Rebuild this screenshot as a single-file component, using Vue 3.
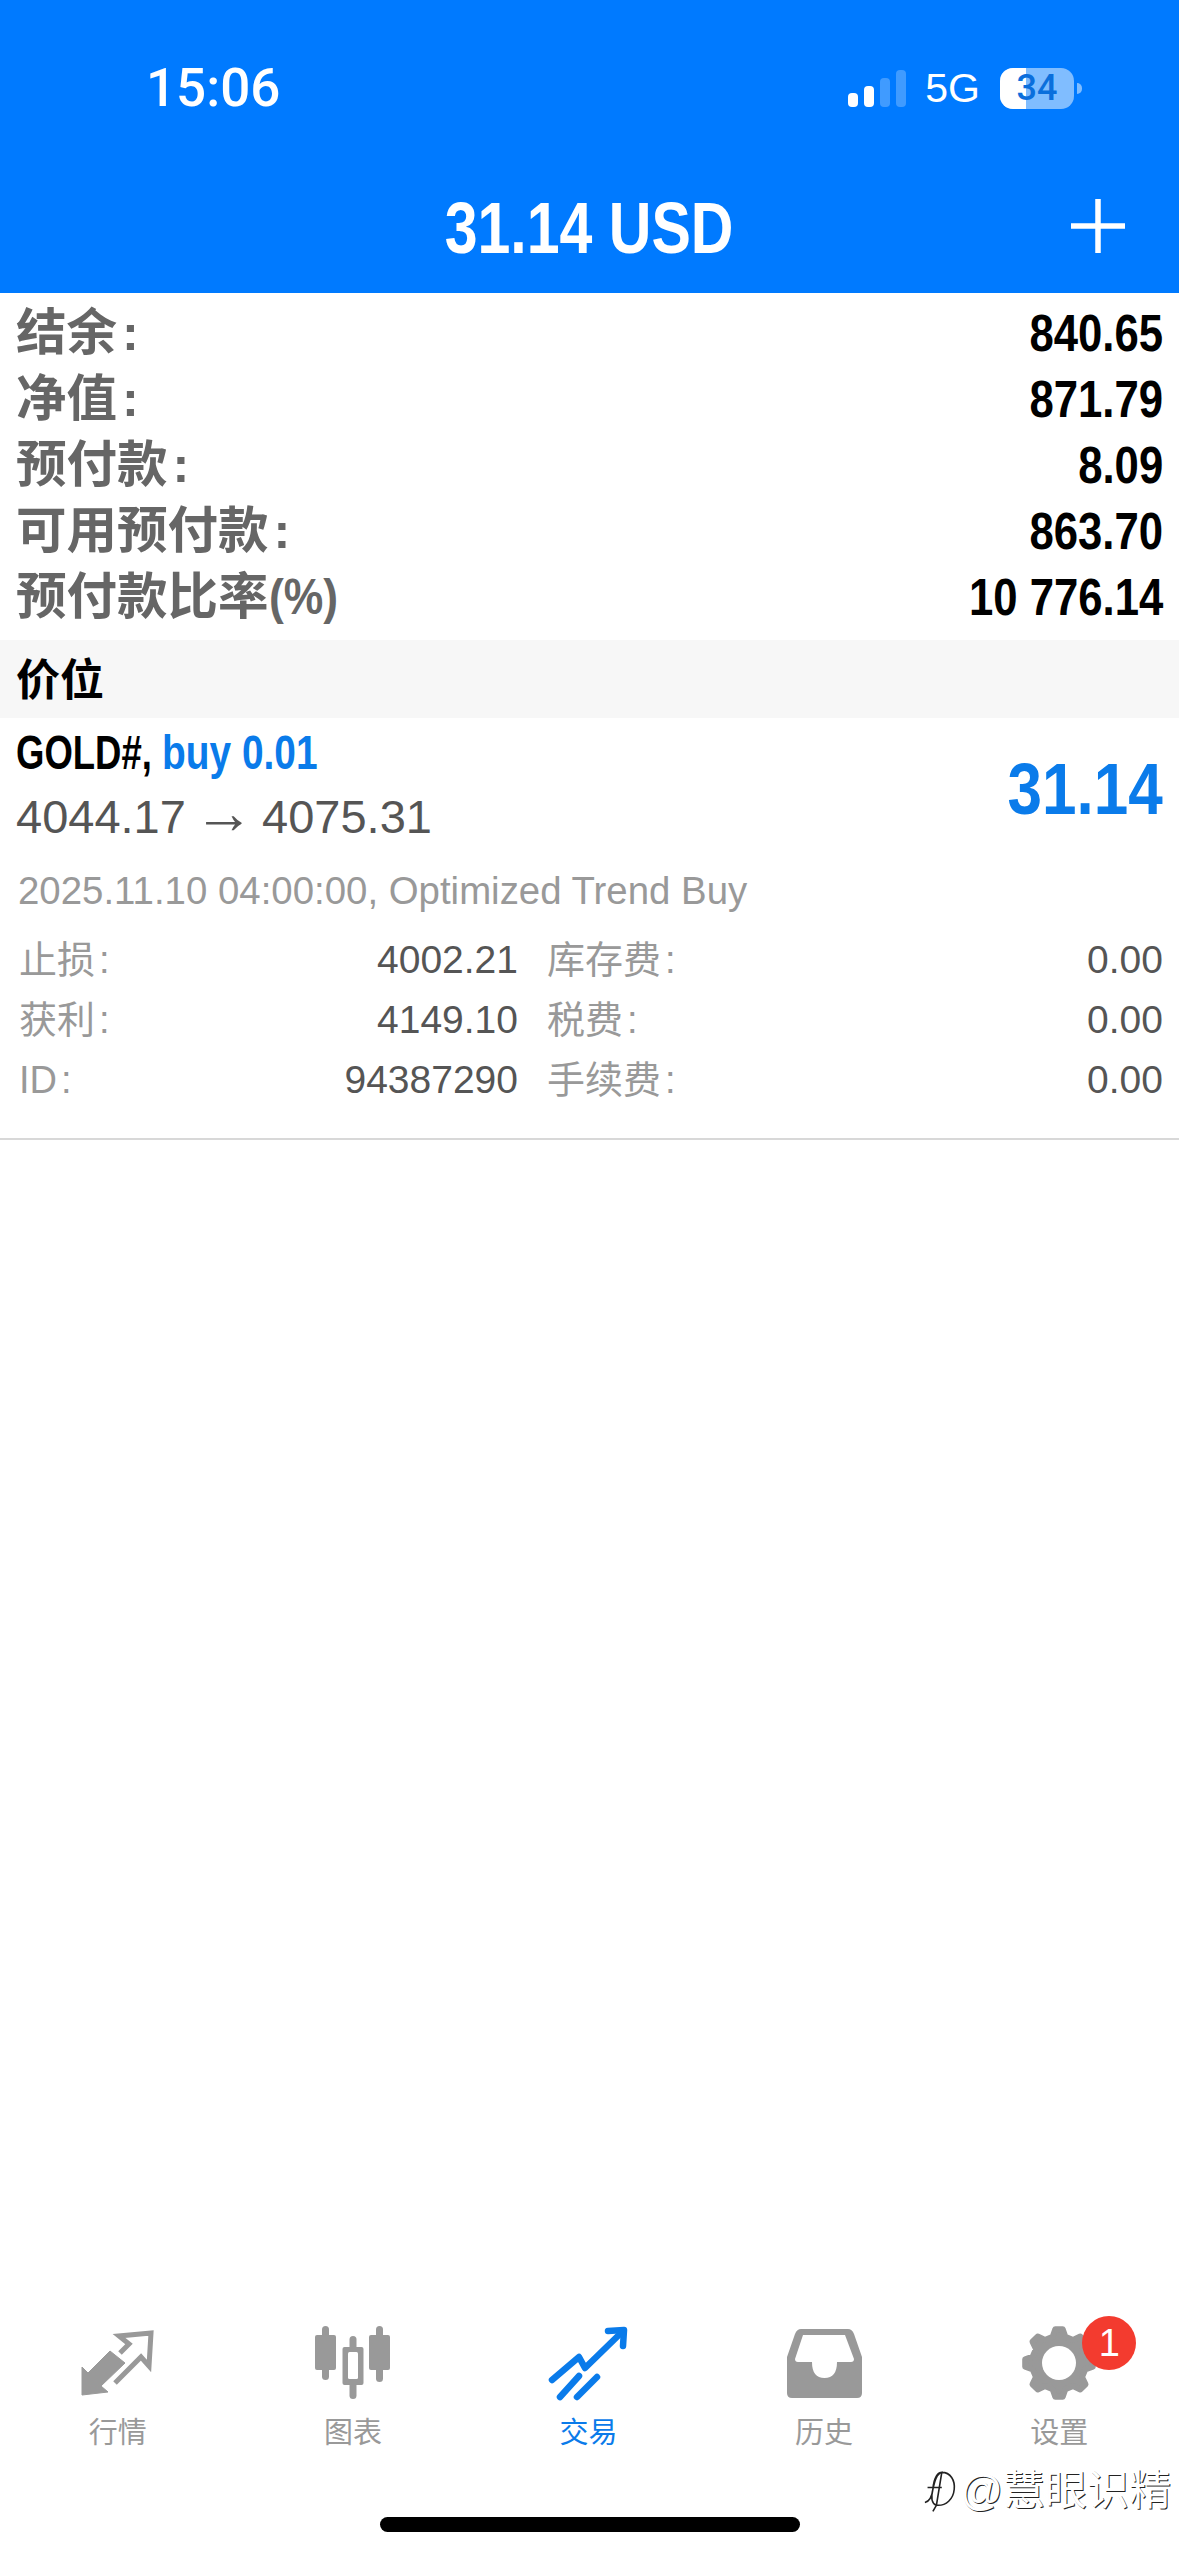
<script setup>
// 交易画面: 口座サマリー、ポジション、下部タブ
const summary = [
  { label: '结余', colon: true, value: '840.65' },
  { label: '净值', colon: true, value: '871.79' },
  { label: '预付款', colon: true, value: '8.09' },
  { label: '可用预付款', colon: true, value: '863.70' },
  { label: '预付款比率', suffix: '(%)', value: '10 776.14' }
]

const details = [
  { label: '止损', value: '4002.21', label2: '库存费', value2: '0.00' },
  { label: '获利', value: '4149.10', label2: '税费', value2: '0.00' },
  { label: 'ID', value: '94387290', label2: '手续费', value2: '0.00' }
]

// 歯車のアウトライン
const gearPoints = (() => {
  const pts = []
  const teeth = 8
  for (let i = 0; i < teeth; i++) {
    const a = (i / teeth) * Math.PI * 2 - Math.PI / 2
    const step = (Math.PI * 2) / teeth
    const add = (r, d) => {
      pts.push(
        (45 + r * Math.cos(a + d * step)).toFixed(1) + ',' + (38 + r * Math.sin(a + d * step)).toFixed(1)
      )
    }
    add(27, -0.3)
    add(34, -0.14)
    add(34, 0.14)
    add(27, 0.3)
  }
  return pts.join(' ')
})()
</script>

<template>
  <div class="page">
    <header class="top">
      <div class="status">
        <span class="time">15:06</span>
        <div class="status__right">
          <div class="signal">
            <i class="bar bar--1"></i>
            <i class="bar bar--2"></i>
            <i class="bar bar--3 bar--off"></i>
            <i class="bar bar--4 bar--off"></i>
          </div>
          <span class="net">5G</span>
          <div class="battery">
            <div class="battery__body">
              <div class="battery__fill"></div>
              <span class="battery__num">34</span>
            </div>
            <i class="battery__nub"></i>
          </div>
        </div>
      </div>
      <div class="nav">
        <span class="nav__title">31.14 USD</span>
        <svg class="nav__plus" viewBox="0 0 54 54" width="54" height="54">
          <path d="M27 0V54M0 27H54" stroke="#fff" stroke-width="5.5" fill="none" />
        </svg>
      </div>
    </header>

    <section class="summary">
      <div v-for="row in summary" :key="row.label" class="summary__row">
        <span class="summary__label">{{ row.label }}<span v-if="row.colon" class="summary__colon">:</span><span v-if="row.suffix" class="summary__suffix">{{ row.suffix }}</span></span>
        <span class="summary__value narrow narrow--right">{{ row.value }}</span>
      </div>
    </section>

    <div class="section-title">价位</div>

    <section class="position">
      <div class="position__head">
        <div>
          <div class="position__name">
            <span class="position__symbol">GOLD#,</span>
            <span class="position__side">buy 0.01</span>
          </div>
          <div class="position__price">4044.17 <span class="position__arrow">→</span> 4075.31</div>
        </div>
        <span class="position__profit">31.14</span>
      </div>
      <div class="position__date">2025.11.10 04:00:00, Optimized Trend Buy</div>
      <div class="details">
        <div v-for="d in details" :key="d.label" class="details__row">
          <div class="details__cell">
            <span class="details__label">{{ d.label }}<span class="details__colon">:</span></span>
            <span class="details__value">{{ d.value }}</span>
          </div>
          <div class="details__cell">
            <span class="details__label">{{ d.label2 }}<span class="details__colon">:</span></span>
            <span class="details__value">{{ d.value2 }}</span>
          </div>
        </div>
      </div>
    </section>

    <div class="spacer"></div>

    <nav class="tabs">
      <div class="tab">
        <svg viewBox="0 0 90 80" width="90" height="80">
          <path d="M9 70L9 42L15 48L37 26L52 38L28 61L35 67Z" fill="#999" stroke="#999" stroke-width="1" stroke-linejoin="round" />
          <path d="M47 28L56 19L46 11L78 8L76 41L68 32L42 58" fill="none" stroke="#999" stroke-width="5" />
        </svg>
        <span class="tab__label">行情</span>
      </div>
      <div class="tab">
        <svg viewBox="0 0 90 80" width="90" height="80">
          <g fill="#999">
            <rect x="7" y="10" width="21" height="35" rx="2" />
            <rect x="14" y="1" width="7" height="54" rx="3.5" />
            <rect x="34.5" y="22" width="21" height="38" rx="2" />
            <rect x="41.5" y="11" width="7" height="63" rx="3.5" />
            <rect x="61" y="10" width="21" height="35" rx="2" />
            <rect x="68" y="1" width="7" height="56" rx="3.5" />
          </g>
          <rect x="40" y="27" width="10" height="27" rx="1.5" fill="#fff" />
        </svg>
        <span class="tab__label">图表</span>
      </div>
      <div class="tab">
        <svg viewBox="0 0 90 80" width="90" height="80">
          <g fill="none" stroke="#0a7bea" stroke-width="6.5" stroke-linecap="round" stroke-linejoin="round">
            <path d="M8 55L35 32L41 43L79 6" />
            <path d="M64 6L80 5L79 21" />
            <path d="M16 72L35 51" />
            <path d="M33 72L53 52" />
          </g>
        </svg>
        <span class="tab__label tab__label--active">交易</span>
      </div>
      <div class="tab">
        <svg viewBox="0 0 90 80" width="90" height="80">
          <path d="M22 4H69Q73 4 75 9L83 32V68Q83 73 78 73H13Q8 73 8 68V32L16 9Q18 4 22 4Z" fill="#999" />
          <path d="M24 10H66L75 34Q75 37 72 37H58Q58 53 45.5 53Q33 53 33 37H19Q16 37 16 34Z" fill="#fff" />
        </svg>
        <span class="tab__label">历史</span>
      </div>
      <div class="tab">
        <div class="tab__icon">
          <svg viewBox="0 0 90 80" width="90" height="80">
            <polygon :points="gearPoints" fill="#999" stroke="#999" stroke-width="6" stroke-linejoin="round" />
            <circle cx="45" cy="38" r="17" fill="#fff" />
          </svg>
          <span class="badge">1</span>
        </div>
        <span class="tab__label">设置</span>
      </div>
    </nav>

    <div class="home"><i class="home__bar"></i></div>

    <div class="watermark">
      <svg viewBox="0 0 36 48" width="32" height="44">
        <path d="M20 3C30 3 35 12 34 22C33 33 25 41 14 40L10 47M14 40C8 38 8 30 10 22C12 13 14 5 20 3ZM4 20H20M20 3C16 3 11 8 10 22C9 30 6 36 1 37" fill="none" stroke="#222" stroke-width="1.8" />
      </svg>
      <span>@慧眼识精</span>
    </div>
  </div>
</template>

<style>
html,
body {
  margin: 0;
  background: #fff;
}
</style>

<style scoped>
.page {
  position: relative;
  width: 1179px;
  height: 2556px;
  display: flex;
  flex-direction: column;
  overflow: hidden;
  background: #fff;
  font-family: "Liberation Sans", "Noto Sans CJK SC", sans-serif;
}

.narrow {
  display: inline-block;
  white-space: pre;
  transform: scaleX(0.84);
}

.narrow--right {
  transform-origin: right center;
}

/* top */
.top {
  height: 293px;
  background: #007aff;
  color: #fff;
  display: flex;
  flex-direction: column;
  flex-shrink: 0;
}

.status {
  display: flex;
  justify-content: space-between;
  align-items: center;
  height: 70px;
  margin-top: 53px;
  padding: 0 97px 0 146px;
}

.time {
  font-family: Roboto, "Liberation Sans", sans-serif;
  font-size: 53px;
  font-weight: 500;
  line-height: 70px;
}

.status__right {
  display: flex;
  align-items: center;
}

.signal {
  display: flex;
  align-items: flex-end;
  gap: 6px;
  height: 37px;
}

.bar {
  width: 10px;
  background: #fff;
  border-radius: 4px;
}

.bar--off {
  background: rgba(255, 255, 255, 0.25);
}

.bar--1 {
  height: 14px;
}

.bar--2 {
  height: 21px;
}

.bar--3 {
  height: 29px;
}

.bar--4 {
  height: 37px;
}

.net {
  margin-left: 19px;
  font-size: 41px;
  line-height: 40px;
}

.battery {
  display: flex;
  align-items: center;
  margin-left: 20px;
}

.battery__body {
  position: relative;
  width: 74px;
  height: 41px;
  border-radius: 13px;
  overflow: hidden;
  background: rgba(255, 255, 255, 0.5);
  display: flex;
  align-items: center;
  justify-content: center;
}

.battery__fill {
  position: absolute;
  left: 0;
  top: 0;
  bottom: 0;
  width: 26px;
  background: #fff;
}

.battery__num {
  position: relative;
  font-family: Roboto, "Liberation Sans", sans-serif;
  font-size: 36px;
  font-weight: 500;
  color: #0b6fdc;
}

.battery__nub {
  width: 5px;
  height: 11px;
  margin-left: 3px;
  background: rgba(255, 255, 255, 0.5);
  border-radius: 0 6px 6px 0;
}

.nav {
  position: relative;
  display: flex;
  justify-content: center;
  align-items: center;
  height: 80px;
  margin-top: 65px;
}

.nav__title {
  font-size: 72px;
  font-weight: 700;
  line-height: 80px;
  transform: scaleX(0.82);
  white-space: pre;
}

.nav__plus {
  position: absolute;
  right: 54px;
  top: 11px;
}

/* summary */
.summary {
  padding-top: 7px;
}

.summary__row {
  display: flex;
  justify-content: space-between;
  align-items: center;
  height: 66px;
  padding: 0 16px;
}

.summary__label {
  font-size: 50.5px;
  font-weight: 700;
  color: #666;
  line-height: 66px;
}

.summary__colon {
  margin-left: 5px;
}

.summary__suffix {
  display: inline-block;
  transform: scaleX(0.88);
  transform-origin: left center;
}

.summary__value {
  font-size: 52px;
  font-weight: 700;
  color: #000;
  line-height: 66px;
}

.section-title {
  margin-top: 10px;
  height: 78px;
  padding: 0 16px;
  background: #f7f7f7;
  color: #000;
  font-size: 44px;
  font-weight: 700;
  line-height: 82px;
}

/* position */
.position {
  padding: 3px 16px 28px;
  border-bottom: 2px solid #d8d8d8;
}

.position__head {
  display: flex;
  justify-content: space-between;
  align-items: center;
}

.position__name {
  display: flex;
  font-size: 48px;
  font-weight: 700;
  line-height: 64px;
  color: #000;
}

.position__symbol {
  width: 146px;
  white-space: pre;
  transform: scaleX(0.76);
  transform-origin: left center;
}

.position__side {
  white-space: pre;
  color: #0a7bea;
  transform: scaleX(0.81);
  transform-origin: left center;
}

.position__price {
  font-size: 47px;
  line-height: 64px;
  color: #555;
}

.position__arrow {
  font-size: 60px;
  line-height: 0;
  margin: 0 -5px;
}

.position__profit {
  padding-top: 8px;
  font-size: 73px;
  font-weight: 700;
  line-height: 84px;
  color: #0a7bea;
  transform: scaleX(0.85);
  transform-origin: right center;
}

.position__date {
  margin-top: 12px;
  padding-left: 2px;
  font-size: 38.4px;
  line-height: 60px;
  color: #999;
}

.details {
  margin-top: 9px;
}

.details__row {
  display: grid;
  grid-template-columns: 502px 1fr;
  column-gap: 29px;
  height: 60px;
}

.details__cell {
  display: flex;
  justify-content: space-between;
  align-items: center;
  line-height: 60px;
}

.details__label {
  padding-left: 3px;
  font-size: 38px;
  color: #999;
}

.details__colon {
  margin-left: 4px;
}

.details__cell + .details__cell .details__label {
  padding-left: 0;
}

.details__value {
  font-size: 39px;
  color: #555;
}

.spacer {
  flex: 1;
}

/* tabs */
.tabs {
  display: flex;
  padding-right: 2px;
}

.tab {
  flex: 1;
  display: flex;
  flex-direction: column;
  align-items: center;
  color: #999;
}

.tab__icon {
  position: relative;
  height: 80px;
}

.tab svg {
  display: block;
}

.tab__label {
  margin-top: 8px;
  font-size: 29px;
  line-height: 40px;
}

.tab__label--active {
  color: #0a7bea;
}

.badge {
  position: absolute;
  left: 68px;
  top: -9px;
  width: 54px;
  height: 54px;
  border-radius: 50%;
  background: #f33b2f;
  color: #fff;
  font-size: 38px;
  line-height: 54px;
  text-align: center;
}

.home {
  display: flex;
  justify-content: center;
  margin-top: 64px;
  height: 39px;
}

.home__bar {
  width: 420px;
  height: 15px;
  border-radius: 8px;
  background: #000;
}

.watermark {
  position: absolute;
  right: 8px;
  bottom: 40px;
  display: flex;
  align-items: center;
  gap: 4px;
  color: #fff;
  font-size: 42px;
  line-height: 50px;
  text-shadow: 1px 1px 0 #222;
}
</style>
